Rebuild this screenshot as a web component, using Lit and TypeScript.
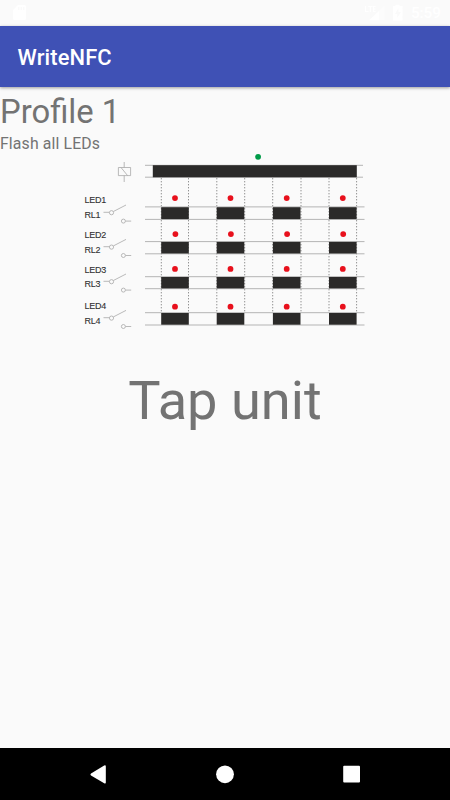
import { LitElement, html, css, svg } from "lit";
import { customElement } from "lit/decorators.js";

interface Channel {
  n: number;
  led: number;
  dx: number;
  top: number;
  bottom: number;
  contact: number;
}

const CHANNELS: Channel[] = [
  { n: 1, led: 198.1, dx: 0, top: 206.9, bottom: 219.4, contact: 212.7 },
  { n: 2, led: 234.1, dx: 0.4, top: 241.6, bottom: 253.8, contact: 247.1 },
  { n: 3, led: 268.9, dx: 0, top: 276.7, bottom: 288.7, contact: 281.7 },
  { n: 4, led: 306.7, dx: 0, top: 312.7, bottom: 325, contact: 318.1 },
];
const LABELS = [203.2, 238.2, 272.6, 308.9];
const PULSES = [161.2, 216.7, 272.9, 329];
const GUIDES = [161.3, 188.5, 216.8, 244.7, 272.7, 301, 329, 356.6];

@customElement("timing-diagram")
export class TimingDiagram extends LitElement {
  static styles = css`
    :host { display: block; }
    svg { display: block; }
    .rail { stroke: #b4b4b4; stroke-width: 1; }
    .bar { fill: #2b2a29; }
    .guide { stroke: #929292; stroke-width: 1; stroke-dasharray: 1.4 1.6; }
    .led { fill: #e8101c; }
    .on { fill: #009b48; }
    .wire { fill: none; stroke: #a8a8a8; stroke-width: 0.8; }
    .label {
      font: 9px "Liberation Sans", Arial, sans-serif;
      fill: #303030;
      stroke: #303030;
      stroke-width: 0.1;
    }
  `;

  private channel(c: Channel, i: number) {
    const y = c.contact;
    return svg`
      <text class="label" x="84.4" y=${LABELS[i]} textLength="21.8">LED${c.n}</text>
      <text class="label" x="84.4" y=${LABELS[i] + 14.7} textLength="16.2">RL${c.n}</text>
      <path class="wire" d="M103.5 ${y - 0.4}H109.3M113.4 ${y - 1.2}L126 ${y - 7.7}M125.6 ${y + 8.4}H131.2"/>
      <circle class="wire" cx="111.5" cy=${y} r="2.1"/>
      <circle class="wire" cx="123.4" cy=${y + 8.4} r="2"/>
      <path class="rail" d="M145 ${c.top}H364.5M145 ${c.bottom}H364.5"/>
      ${PULSES.map(
        (x) => svg`
          <rect class="bar" x=${x} y=${c.top + 0.3} width="27.6" height=${c.bottom - c.top - 0.6}/>
          <circle class="led" cx=${x + 13.8 + c.dx} cy=${c.led} r="2.9"/>`
      )}`;
  }

  render() {
    return html`<svg width="450" height="180" viewBox="0 153 450 180">
      ${GUIDES.map((x) => svg`<path class="guide" d="M${x} 178V313"/>`)}
      <path class="wire" d="M118.4 167.5H130.6V175.6H118.4ZM124.2 162V167.5M124.2 175.6V182M121 167.5L127.6 175.6"/>
      <circle class="on" cx="258.1" cy="156.8" r="2.9"/>
      <path class="rail" d="M145 165.3H363M145 177.2H363"/>
      <rect class="bar" x="152.8" y="165.2" width="204" height="12.1"/>
      ${CHANNELS.map((c, i) => this.channel(c, i))}
    </svg>`;
  }
}

@customElement("app-root")
export class AppRoot extends LitElement {
  static styles = css`
    :host {
      display: flex;
      flex-direction: column;
      width: 450px;
      height: 800px;
      overflow: hidden;
      background: #fafafa;
      color: #737373;
      font-family: Roboto, sans-serif;
    }
    svg { display: block; flex: none; }
    .status {
      display: flex;
      box-sizing: border-box;
      height: 26.3px;
      flex: none;
      align-items: center;
      padding: 0 9px 0 12px;
      color: #fff;
      font-size: 15.3px;
      font-weight: 500;
    }
    .spacer { flex: 1; }
    .clock { margin-left: 8px; line-height: 28px; }
    .bar {
      display: flex;
      align-items: center;
      flex: none;
      box-sizing: border-box;
      height: 61.2px;
      padding: 2px 0 0 17.5px;
      background: #3f51b5;
      box-shadow: 0 1px 3px rgba(0, 0, 0, 0.38);
      color: #fff;
      font-size: 21.9px;
      font-weight: 500;
      letter-spacing: 0.12px;
      position: relative;
    }
    main { flex: 1; display: flex; flex-direction: column; min-height: 0; }
    .profile { margin-top: 5.5px; font-size: 32.8px; line-height: 38px; }
    .detail { margin-top: 3px; font-size: 15.8px; line-height: 19px; letter-spacing: 0.14px; }
    .tap {
      margin-top: 36px;
      text-align: center;
      font-size: 54.2px;
      line-height: 64px;
    }
    .nav { flex: none; height: 52.5px; background: #000; }
  `;

  render() {
    return html`
      <div class="status">
        <svg width="16" height="18" viewBox="0 0 16 18">
          <path fill="#fff" fill-rule="evenodd" d="M6 1H12.5Q14 1 14 2.5V14.5Q14 16 12.5 16H2.5Q1 16 1 14.5V6ZM6 3V6H7.5V3ZM8.5 3V6H10V3ZM11 3V6H12.5V3Z"/>
        </svg>
        <span class="spacer"></span>
        <svg width="42" height="20" viewBox="361 3 42 20">
          <path fill="none" stroke="#fff" stroke-width="1.2" d="M365.5 6V11.5H368.5M368.3 6.5H372.5M370.4 6.5V12M375.5 6.5H373.5V11.5H375.5M373.5 9H375.5"/>
          <path fill="#fff" d="M369 20.3L379 11V20.3Z"/>
          <path fill="#fff" opacity=".4" d="M379 11L384.5 5.5V20.3H379Z"/>
          <path fill="#fff" fill-rule="evenodd" d="M393 6H395.5V4.7H399.5V6H402.5V20.5H393ZM398.5 8L395 14H397.3V18L400.8 12H398.5Z"/>
        </svg>
        <span class="clock">5:59</span>
      </div>
      <header class="bar">WriteNFC</header>
      <main>
        <div class="profile">Profile 1</div>
        <div class="detail">Flash all LEDs</div>
        <timing-diagram></timing-diagram>
        <div class="tap">Tap unit</div>
      </main>
      <svg class="nav" width="450" height="52.5" viewBox="0 747.5 450 52.5">
        <path fill="#fff" d="M104.2 765Q105.8 764.3 105.8 766V782Q105.8 783.5 104.2 782.7L91 775Q89.8 774 91 773Z"/>
        <circle fill="#fff" cx="225" cy="773.8" r="8.9"/>
        <rect fill="#fff" x="343.2" y="765.3" width="16.8" height="16.8" rx="1"/>
      </svg>`;
  }
}
